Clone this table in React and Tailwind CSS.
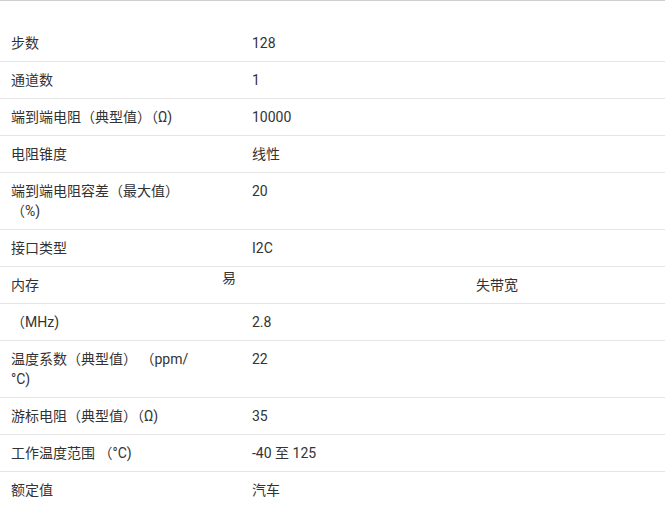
import React from "react";

// 规格表 — 数字电位器参数
const ROWS = [
  { label: "步数", value: "128" },
  { label: "通道数", value: "1" },
  { label: "端到端电阻（典型值）（Ω)", value: "10000" },
  { label: "电阻锥度", value: "线性" },
  { label: "端到端电阻容差（最大值）（%)", value: "20" },
  { label: "接口类型", value: "I2C" },
  { broken: true },
  { label: "（MHz)", value: "2.8" },
  { label: "温度系数（典型值） （ppm/°C)", value: "22" },
  { label: "游标电阻（典型值）（Ω)", value: "35" },
  { label: "工作温度范围 （°C)", value: "-40 至 125" },
  { label: "额定值", value: "汽车" },
];

export default function App() {
  return (
    <div
      className="min-h-screen bg-white text-[14px] leading-[20px] text-[#333333]"
      style={{ fontFamily: "Roboto, 'Noto Sans CJK SC', sans-serif" }}
    >
      <div className="w-[665px] border-t border-[#cfcfcf] pt-6">
        {ROWS.map((r, i) =>
          r.broken ? (
            <div key={i} className="flex border-b border-[#e6e6e6]">
              <div className="w-[211px] px-[11px] py-2">内存</div>
              <div className="w-[254px] px-[11px] pt-px">易</div>
              <div className="flex-1 px-[11px] py-2">失带宽</div>
            </div>
          ) : (
            <div
              key={i}
              className={`flex ${i === ROWS.length - 1 ? "" : "border-b border-[#e6e6e6]"}`}
            >
              <div className="w-[241px] pl-[11px] pr-[45px] py-2">{r.label}</div>
              <div className="flex-1 px-[11px] py-2">{r.value}</div>
            </div>
          )
        )}
      </div>
    </div>
  );
}
